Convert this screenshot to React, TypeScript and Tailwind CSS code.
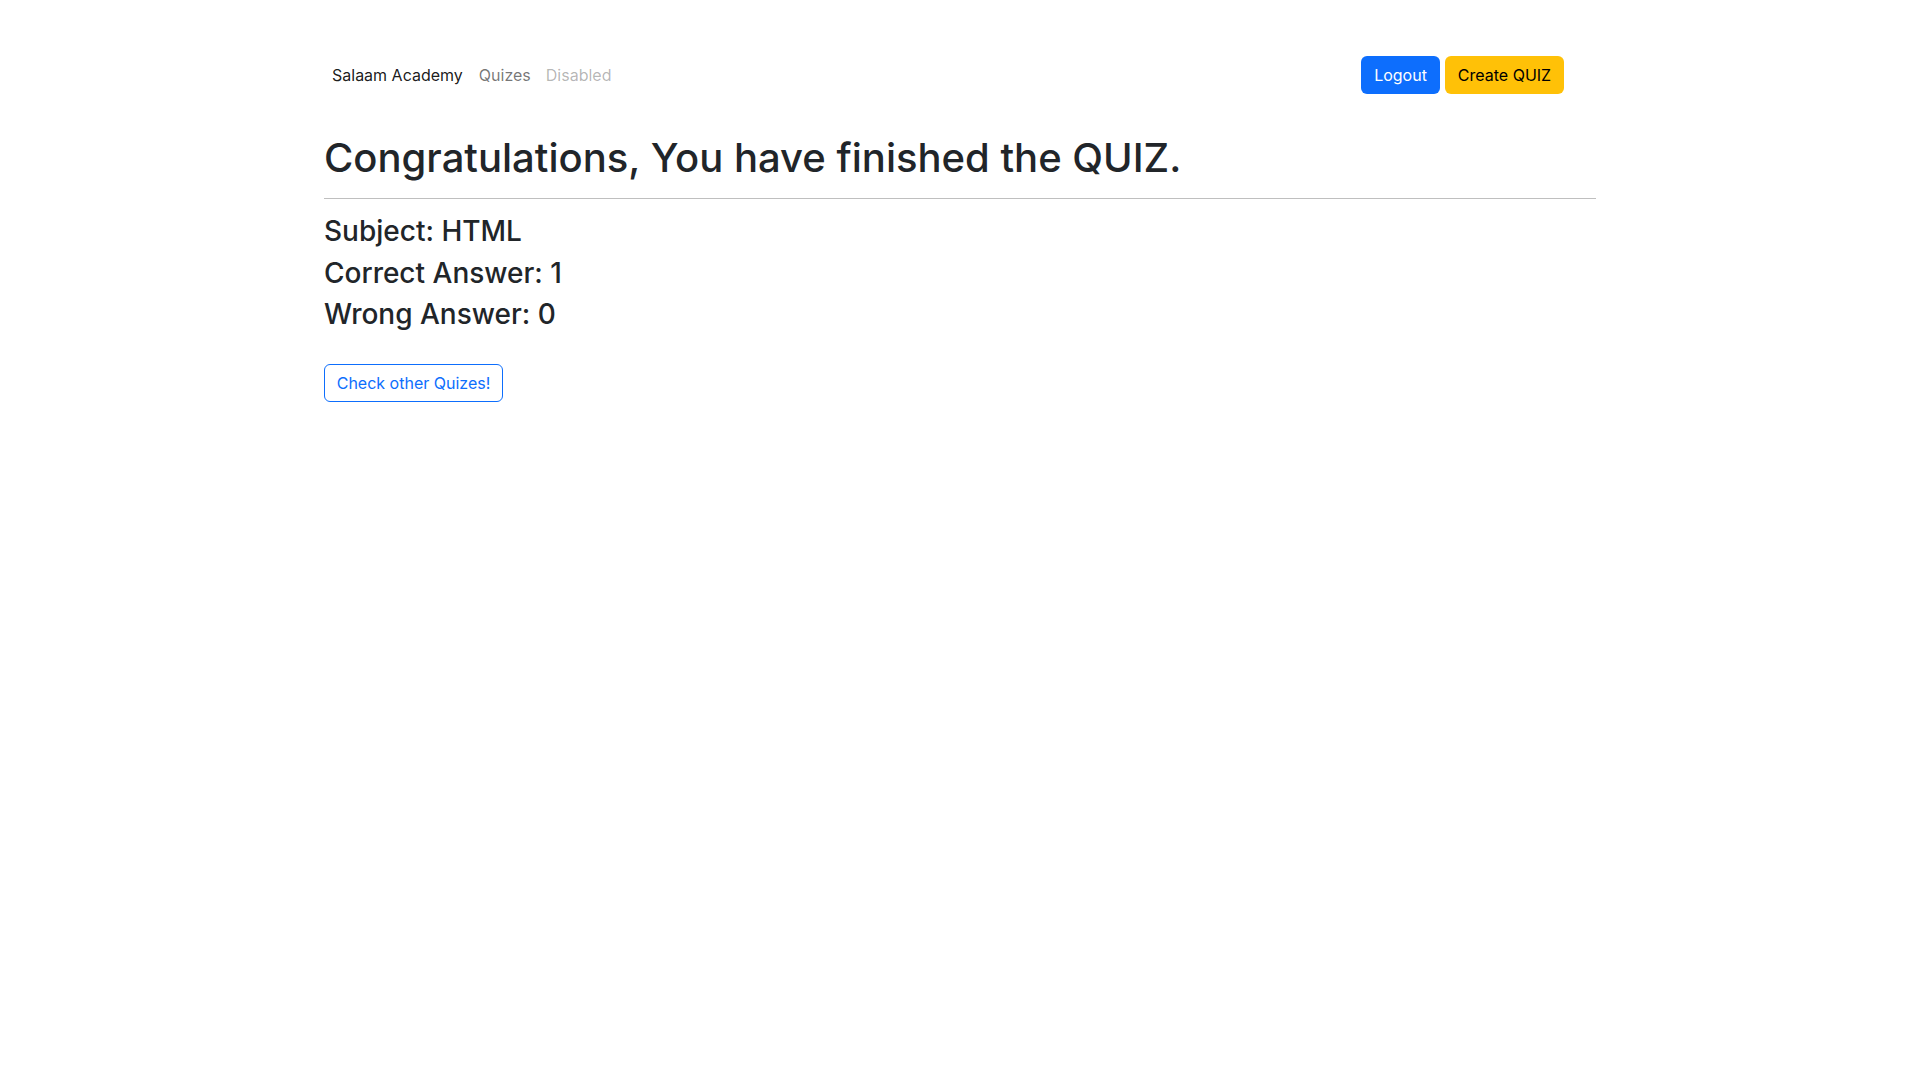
import React from 'react';

const stats = [
  { label: 'Subject', value: 'HTML' },
  { label: 'Correct Answer', value: '1' },
  { label: 'Wrong Answer', value: '0' },
];

const App: React.FC = () => {
  return (
    <div className="min-h-screen bg-white text-[#212529] font-['Inter','Liberation_Sans',sans-serif]">
      <div className="mx-auto w-[1272px]">
        {/* Navbar */}
        <nav className="flex items-center justify-between pt-[56px]">
          <div className="flex items-center h-[38px] pl-2 text-base">
            <a className="text-black/90 mr-[16px]">Salaam Academy</a>
            <a className="text-black/55 mr-[15px]">Quizes</a>
            <a className="text-black/30">Disabled</a>
          </div>
          <div className="flex items-center gap-[5px] mr-8">
            <button className="h-[38px] w-[79px] rounded-md bg-[#0d6efd] text-white text-base leading-6">Logout</button>
            <button className="h-[38px] w-[119px] rounded-md bg-[#ffc107] text-black text-base leading-6">Create QUIZ</button>
          </div>
        </nav>

        {/* Result */}
        <h1 className="mt-[40px] text-[40px] leading-[1.2] font-medium">Congratulations, You have finished the QUIZ.</h1>
        <hr className="my-4 border-t border-black/25" />
        <div>
          {stats.map(s => (
            <h3 key={s.label} className="text-[28px] leading-[1.2] font-medium mb-2">
              {s.label}: {s.value}
            </h3>
          ))}
        </div>
        <button className="mt-[24px] h-[38px] w-[179px] rounded-md border border-[#0d6efd] text-[#0d6efd] text-base leading-6">
          Check other Quizes!
        </button>
      </div>
    </div>
  );
};

export default App;
